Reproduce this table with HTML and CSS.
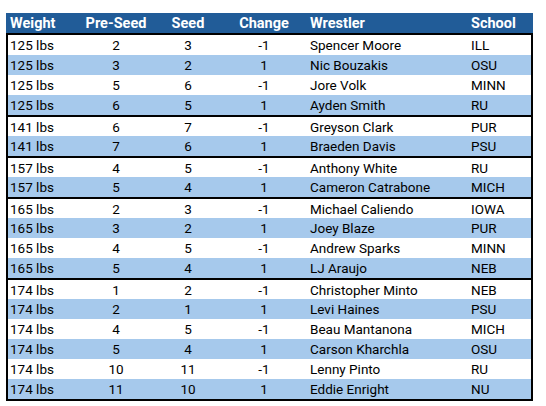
FILE: index.html
```html
<!DOCTYPE html>
<html>
<head>
<meta charset="utf-8">
<link rel="stylesheet" href="styles.css">
</head>
<body>
<div class="sheet">
  <div class="row head">
    <div class="c-weight">Weight</div>
    <div class="c-num">Pre-Seed</div>
    <div class="c-num">Seed</div>
    <div class="c-num">Change</div>
    <div class="c-name">Wrestler</div>
    <div class="c-school">School</div>
  </div>
  <div class="body">
    <div class="group">
      <div class="row"><div class="c-weight">125 lbs</div><div class="c-num">2</div><div class="c-num">3</div><div class="c-num">-1</div><div class="c-name">Spencer Moore</div><div class="c-school">ILL</div></div>
      <div class="row"><div class="c-weight">125 lbs</div><div class="c-num">3</div><div class="c-num">2</div><div class="c-num">1</div><div class="c-name">Nic Bouzakis</div><div class="c-school">OSU</div></div>
      <div class="row"><div class="c-weight">125 lbs</div><div class="c-num">5</div><div class="c-num">6</div><div class="c-num">-1</div><div class="c-name">Jore Volk</div><div class="c-school">MINN</div></div>
      <div class="row"><div class="c-weight">125 lbs</div><div class="c-num">6</div><div class="c-num">5</div><div class="c-num">1</div><div class="c-name">Ayden Smith</div><div class="c-school">RU</div></div>
    </div>
    <div class="group">
      <div class="row"><div class="c-weight">141 lbs</div><div class="c-num">6</div><div class="c-num">7</div><div class="c-num">-1</div><div class="c-name">Greyson Clark</div><div class="c-school">PUR</div></div>
      <div class="row"><div class="c-weight">141 lbs</div><div class="c-num">7</div><div class="c-num">6</div><div class="c-num">1</div><div class="c-name">Braeden Davis</div><div class="c-school">PSU</div></div>
    </div>
    <div class="group">
      <div class="row"><div class="c-weight">157 lbs</div><div class="c-num">4</div><div class="c-num">5</div><div class="c-num">-1</div><div class="c-name">Anthony White</div><div class="c-school">RU</div></div>
      <div class="row"><div class="c-weight">157 lbs</div><div class="c-num">5</div><div class="c-num">4</div><div class="c-num">1</div><div class="c-name">Cameron Catrabone</div><div class="c-school">MICH</div></div>
    </div>
    <div class="group">
      <div class="row"><div class="c-weight">165 lbs</div><div class="c-num">2</div><div class="c-num">3</div><div class="c-num">-1</div><div class="c-name">Michael Caliendo</div><div class="c-school">IOWA</div></div>
      <div class="row"><div class="c-weight">165 lbs</div><div class="c-num">3</div><div class="c-num">2</div><div class="c-num">1</div><div class="c-name">Joey Blaze</div><div class="c-school">PUR</div></div>
      <div class="row"><div class="c-weight">165 lbs</div><div class="c-num">4</div><div class="c-num">5</div><div class="c-num">-1</div><div class="c-name">Andrew Sparks</div><div class="c-school">MINN</div></div>
      <div class="row"><div class="c-weight">165 lbs</div><div class="c-num">5</div><div class="c-num">4</div><div class="c-num">1</div><div class="c-name">LJ Araujo</div><div class="c-school">NEB</div></div>
    </div>
    <div class="group">
      <div class="row"><div class="c-weight">174 lbs</div><div class="c-num">1</div><div class="c-num">2</div><div class="c-num">-1</div><div class="c-name">Christopher Minto</div><div class="c-school">NEB</div></div>
      <div class="row"><div class="c-weight">174 lbs</div><div class="c-num">2</div><div class="c-num">1</div><div class="c-num">1</div><div class="c-name">Levi Haines</div><div class="c-school">PSU</div></div>
      <div class="row"><div class="c-weight">174 lbs</div><div class="c-num">4</div><div class="c-num">5</div><div class="c-num">-1</div><div class="c-name">Beau Mantanona</div><div class="c-school">MICH</div></div>
      <div class="row"><div class="c-weight">174 lbs</div><div class="c-num">5</div><div class="c-num">4</div><div class="c-num">1</div><div class="c-name">Carson Kharchla</div><div class="c-school">OSU</div></div>
      <div class="row"><div class="c-weight">174 lbs</div><div class="c-num">10</div><div class="c-num">11</div><div class="c-num">-1</div><div class="c-name">Lenny Pinto</div><div class="c-school">RU</div></div>
      <div class="row"><div class="c-weight">174 lbs</div><div class="c-num">11</div><div class="c-num">10</div><div class="c-num">1</div><div class="c-name">Eddie Enright</div><div class="c-school">NU</div></div>
    </div>
  </div>
</div>
</body>
</html>
```

FILE: styles.css
```css
html, body {
  margin: 0;
  padding: 0;
  background: #ffffff;
}

body {
  font-family: Roboto, "Liberation Sans", sans-serif;
  font-size: 13.5px;
  color: #000000;
}

.sheet {
  width: 527px;
  padding: 13px 0 0 6px;
}

.row {
  display: grid;
  grid-template-columns: 72px 72px 72px 80px 163px 64px;
  height: 20px;
  align-items: center;
  white-space: nowrap;
}

.row.head {
  grid-template-columns: 74px 72px 72px 80px 163px 66px;
  background: #215c98;
  color: #ffffff;
  font-weight: bold;
  font-size: 14.5px;
}

.head .c-weight {
  padding-left: 4px;
}

.body {
  border: 2px solid #000000;
}

.group + .group {
  border-top: 2px solid #000000;
}

.group + .group .row:first-child {
  height: 19px;
}

.group .row:nth-child(even) {
  background: #a6c9ec;
}

.c-weight {
  padding-left: 2px;
}

.c-num {
  text-align: center;
}

.c-name {
  padding-left: 6px;
}

.c-school {
  padding-left: 4px;
}
```
